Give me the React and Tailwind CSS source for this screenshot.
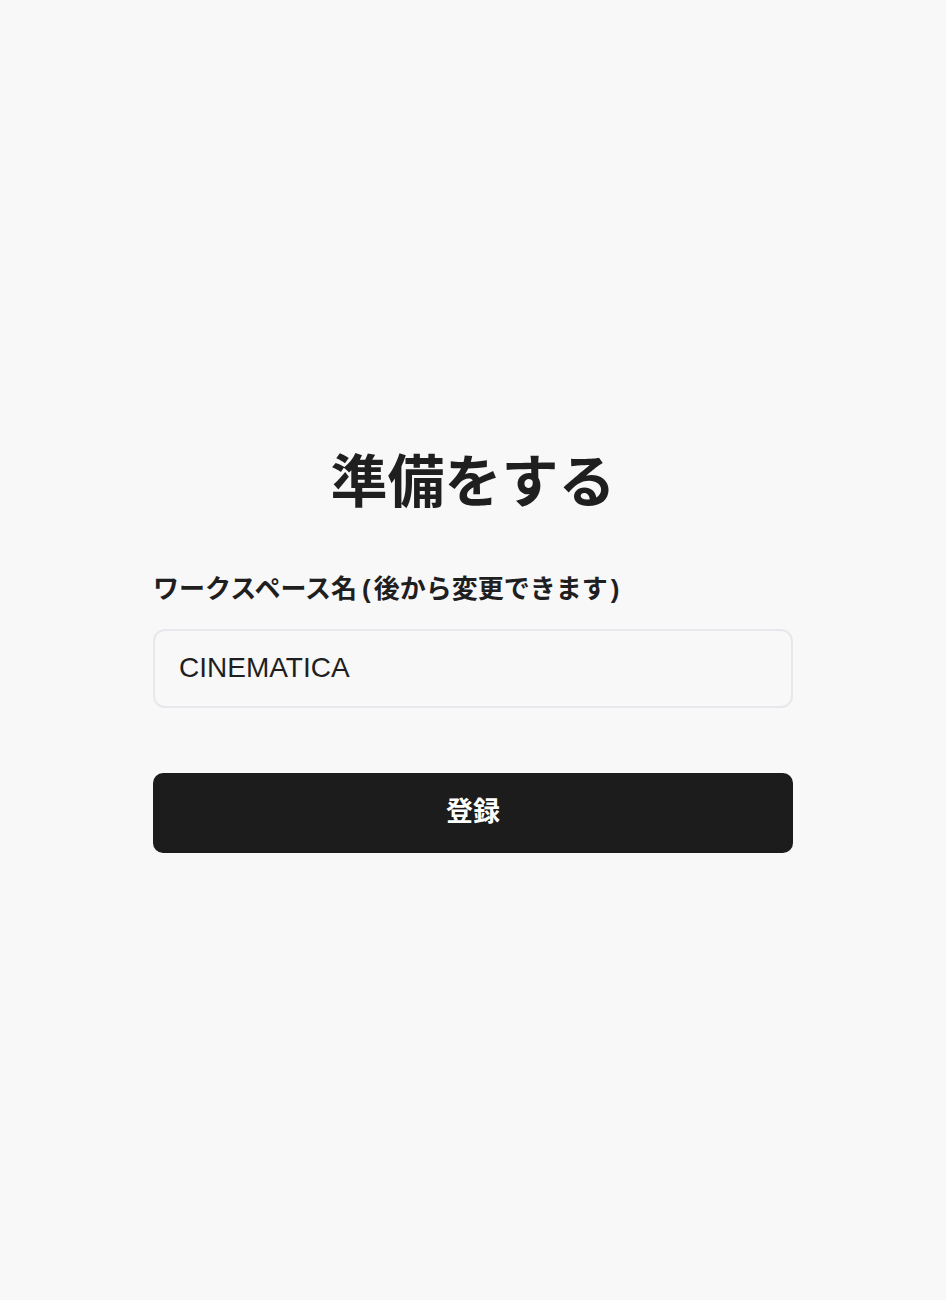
import { useState } from 'react'

const jp = "font-['Liberation_Sans','Noto_Sans_CJK_JP',sans-serif]"

const App = () => {
    const [name, setName] = useState('CINEMATICA')
    return (
        <div className={`min-h-[1300px] bg-[#f8f8f8] flex items-center justify-center ${jp}`}>
            <div className="w-[640px] flex flex-col">
                <h1 className="text-center text-[57px] leading-[68px] font-bold text-[#1f1f1f]">準備をする</h1>
                <label className="mt-[55px] text-[26px] leading-[36px] font-bold text-[#1f1f1f]">
                    ワークスペース名<span className="ml-[5px] mr-[3px]">(</span>後から変更できます<span className="ml-[3px]">)</span>
                </label>
                <input
                    value={name}
                    onChange={(e) => setName(e.target.value)}
                    className="mt-[22px] h-[79px] w-full rounded-[12px] border-2 border-[#e8e8ec] bg-[#f8f8f9] px-[24px] text-[28px] text-[#1f1f1f] outline-none"
                />
                <button className="mt-[65px] h-[80px] w-full rounded-[10px] bg-[#1c1c1c] text-[27px] font-bold text-white">登録</button>
            </div>
        </div>
    )
}

export default App
